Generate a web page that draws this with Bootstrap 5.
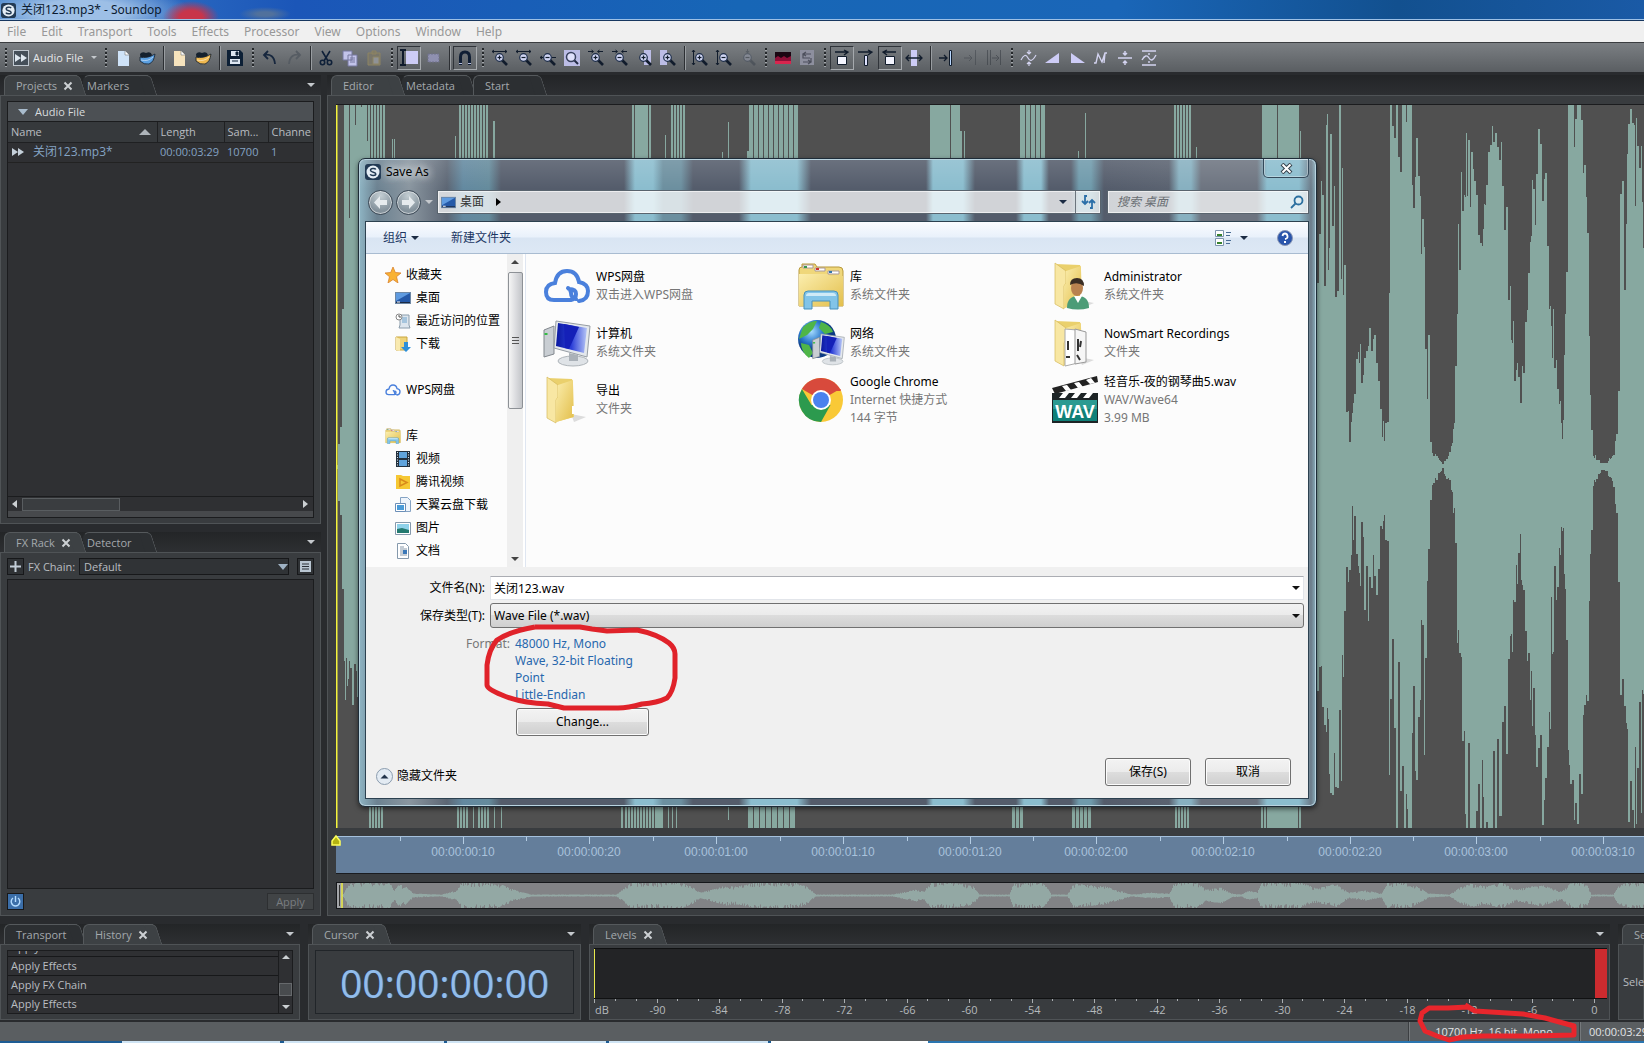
<!DOCTYPE html>
<html lang="zh-CN">
<head>
<meta charset="utf-8">
<meta name="viewport" content="width=device-width, initial-scale=1">
<title>关闭123.mp3* - Soundop</title>
<link href="https://cdn.jsdelivr.net/npm/bootstrap@5.3.0/dist/css/bootstrap.min.css" rel="stylesheet">
<style>
:root{--panel:#393c3f;--well:#2f3033;--edge:#4f5356;--ink:#b9bdc1;--teal:#87a8a0}
body{font-family:"Open Sans","Noto Sans CJK SC",sans-serif;font-size:11px;line-height:16px;color:var(--ink);background:#292b2e;height:100vh;overflow:hidden}
button,input,select{font:inherit;color:inherit}
button{border:0;background:none;padding:0;white-space:nowrap}
svg{display:block;flex:none}
a{color:inherit;text-decoration:none}
.app-title{height:21px;padding-left:1px;gap:5px;font-family:"Noto Sans","Noto Sans CJK SC",sans-serif;font-size:12px;color:#0a1a30;border-bottom:1px solid #16365f;box-shadow:inset 0 -1px #9cc0e6;
 background:radial-gradient(ellipse 28px 16px at 191px 17px,#c8354a 40%,#c3263c00),radial-gradient(ellipse 26px 7px at 265px 14px,#51719c 30%,#51719c00),radial-gradient(ellipse 110px 30px at 80px 12px,#9dbfe6 40%,#9dbfe600),linear-gradient(90deg,#3e7fca,#1b56b8 18%,#1766b6 45%,#1a66b8 68%,#12508f 85%,#1a5aa6)}
.app-menu{height:21px;background:#f0f0f0;font-family:"Noto Sans",sans-serif;font-size:12px;color:#989898}
.app-menu a{padding:0 8px 0 7px}
.app-tools{height:30px;background:linear-gradient(#7b7f83,#5a5e62);border-top:1px solid #3b3d40}
.tool{width:24px;height:24px;display:flex;align-items:center;justify-content:center;border:1px solid transparent}
.tool.on{border-color:#30343a #a5a9ad #a5a9ad #30343a}
.grip{width:11px;height:20px;background:repeating-linear-gradient(#24272a 0 2px,#a2a6aa 2px 3px,transparent 3px 4px) 5px 0/2px 100% no-repeat}
.bar{width:8px;height:24px;background:linear-gradient(90deg,#2c2f33 50%,#999da1 50%) 4px 0/2px 100% no-repeat}
.mode{width:89px;gap:4px;padding-left:2px;color:#e6e8ea}
.tri{width:0;height:0;border:4px solid transparent;border-bottom:0;border-top:4px solid #c4c8cc;flex:none}
.tri.big{border-width:6px 5px 0;border-top-color:#a9bccd}
.mode .tri{border-width:3px 3px 0}
.dock{min-width:0;min-height:0}
.work{min-height:0;padding-top:3px;gap:6px}
.tabs{height:20px;flex:none;background:linear-gradient(#232527,#2d2f32);padding:0 6px 0 4px}
.tab-x{position:relative;height:20px;padding:0 8px 0 11px;border:1px solid #55595c;border-width:1px 0 0 1px;border-radius:6px 0 0 0;background:#2c2f32;color:#a4a9ad;gap:6px;margin-right:6px;white-space:nowrap}
.tab-x::after{content:"";position:absolute;top:-1px;right:-6px;width:12px;height:20px;background:inherit;border:1px solid #55595c;border-width:1px 1px 0 0;border-top-right-radius:5px;transform:skewX(18deg)}
.tab-x>*{position:relative;z-index:1}
.tab-x.on{background:#3d4144;z-index:2}
.tab-x.next{border-left-color:transparent;padding-left:3px}
.w70{width:70px}.w73{width:73px}.w65{width:65px}
.dock-in{flex:1;background:var(--panel);border:1px solid var(--edge);min-height:0}
.dock-pad{padding:5px 6px}
.well{background:var(--well);border:1px solid #1b1c1e}
.left-col{width:321px}
.grp{height:20px;background:#4c5054;border-bottom:1px solid #1b1c1e;padding-left:10px;gap:7px;color:#d8dbdd}
.files{table-layout:fixed;width:100%;border-collapse:collapse}
.files th{height:20px;font-weight:400;background:#36393c;border-right:1px solid #1f2022;border-bottom:1px solid #1f2022;padding:0 2px 0 3px;white-space:nowrap;overflow:hidden}
.files td{height:20px;color:#84a3c4;border-bottom:1px solid #222;padding:0 3px;white-space:nowrap}
.files th:last-child{border-right:0;padding-right:0}
.track-name{font-size:12px}
.hbar{height:15px;border-top:1px solid #1b1c1e;padding:0 4px}
.hbar i{width:98px;height:13px;background:#3a3d40;border:1px solid #595d60}
.hfoot{height:6px;background:#47494c}
.sq{width:17px;height:17px;border:1px solid #17181a;background:#2f3235;display:flex;align-items:center;justify-content:center}
.sq.lit{background:#3b6ea8}
.fxsel{appearance:none;width:100%;height:17px;border:1px solid #17181a;border-radius:0;background:#303336;padding:0 4px;line-height:14px;color:var(--ink)}
.pick{position:relative;flex:1}
.pick::after{content:"";position:absolute;right:5px;top:50%;margin-top:-3px;border:5px solid transparent;border-top:6px solid #9fb2c4;border-bottom:0;pointer-events:none}
.fx-pick::after{right:1px}
.apply{width:47px;height:17px;border:1px solid #2d2f31;background:#414446;color:#797d80}
.editor{margin-right:-8px}
.ed-pad{padding:8px 0 6px 8px}
.wavebox{background:#505050;border-top:1px solid #1b1c1e;overflow:hidden;min-height:0}
.ruler{height:38px;background:#647e9b;border-top:1px solid #a4c0dc;border-bottom:1px solid #1a1c20}
.over{height:27px;background:#828386;border:1px solid #15171a;border-right:0}
.lower{height:106px;padding-bottom:2px}
.d-hist{width:300px}.d-cur{width:273px}.d-sel{width:26px}
.hist{flex:1;overflow:hidden;display:flex;flex-direction:column;justify-content:flex-end}
.hist li{height:19px;line-height:18px;padding-left:3px;border-top:1px solid #17181a;flex:none}
.vbar{width:14px;border-left:1px solid #1b1c1e;padding:4px 0}
.vbar i{width:13px;height:13px;background:#484b4e;border:1px solid #66696c;margin-top:auto;margin-bottom:9px}
.clock{font-size:39px;line-height:64px;color:#93bdea;text-shadow:1px 0 #2c5f96}
.meter{height:51px;background:#232426;border:1px solid #101112;border-width:1px 0}
.meter i:first-child{width:1px;background:#e9e94e}.meter i:last-child{width:12px;background:#cc2b2f}
.meter-pad{padding:3px 2px 0 4px}
.status-x{position:relative;height:19px;background:#5a5e61;color:#e2e4e6}
.status-x div{border-left:1px solid #3c3f42;box-shadow:inset 1px 0 #75797c;line-height:19px}
.s-fmt{width:171px}.s-len{width:65px;padding-left:9px;white-space:nowrap}
.taskbar{height:2px;background:linear-gradient(90deg,#1d5c94 122px,#cfe4f4 122px 280px,#1d5c94 280px 284px,#cfe4f4 284px 444px,#1d5c94 444px 447px,#cfe4f4 447px 606px,#1d5c94 606px 609px,#cfe4f4 609px 768px,#1d5c94 768px 771px,#fff 771px 928px,#2a75b0 928px)}
.ink-mark{position:absolute;pointer-events:none;z-index:9;overflow:visible}
/* save dialog */
.save{position:absolute;left:358px;top:158px;width:959px;height:649px;padding:0 7px 7px 6px;border:1px solid #1e2c38;border-radius:7px;box-shadow:inset 0 0 0 1px #b9d3df,0 2px 5px #0008;font-family:"Noto Sans","Noto Sans CJK SC",sans-serif;font-size:12px;line-height:18px;color:#000;z-index:5;
 background:linear-gradient(#ffffff22,transparent 30px,transparent 60px),linear-gradient(90deg,#8fb5c4 0,#6c8291 18px,#8a96a0 50px,#5c6674 88px,#6389a0 104px,#658b9c 130px,#545c6b 142px,#545c6b 265px,#8bbdce 276px,#8bbdce 294px,#6c8f9f 304px,#6c8f9f 322px,#545c6b 334px,#545c6b 380px,#8bbdce 392px,#8bbdce 438px,#545c6b 452px,#545c6b 567px,#8bbdce 574px,#8bbdce 604px,#545c6b 616px,#545c6b 657px,#8bbdce 665px,#8bbdce 682px,#545c6b 690px,#545c6b 712px,#6f9aab 720px,#6f9aab 732px,#545c6b 745px,#5a6270 810px,#87b0c0 820px,#87b0c0 832px,#6d7480 842px,#6d7480 898px,#8bbdce 908px,#8bbdce 940px,#6c7c8a 952px,#8bb0be)}
.save-title{height:31px}
.cap{height:26px;gap:5px}
.cap span{text-shadow:0 0 8px #fff,0 0 8px #fff}
.x-close{width:46px;height:19px;border:1px solid #34495a;border-top:0;border-radius:0 0 5px 5px;box-shadow:inset 0 0 0 1px #ffffff55;display:flex;align-items:center;justify-content:center}
.nav-row{height:31px;padding-bottom:7px}
.nav-b{width:25px;height:25px;margin-left:3px;border-radius:50%;border:1px solid #3b4855;background:radial-gradient(circle at 50% 20%,#c4ced3,#84929c 70%);display:flex;align-items:center;justify-content:center;box-shadow:inset 0 0 0 1px #fff8}
.addr{height:24px;background:#ffffffbb;border:1px solid #59646e;box-shadow:inset 0 0 0 1px #ffffff99;color:#333;gap:4px;padding-left:3px}
.find{width:202px;margin-left:6px}
.addr input{border:0;background:none;outline:0;font-style:italic;width:100%;min-width:0;padding:0 0 0 6px}
.addr input::placeholder{color:#6a6f74;opacity:1}
.dn{width:0;height:0;border:4px solid transparent;border-top-color:#1c2c44;border-bottom:0}
.client{flex:1;min-height:0;background:#f0f0f0;border:1px solid #2c4150}
.cmd{height:32px;background:linear-gradient(#fafcff,#e9f1fb 48%,#d9e5f3 52%,#dde8f5);border-bottom:1px solid #a9bcd1;color:#1c3763;padding:0 15px 0 17px}
.new-b{margin-left:32px}.help-b{margin-left:29px}
.browse{height:313px;background:#fcfcfc}
.tree{width:141px;overflow:hidden;padding-top:9px}
.tree li{height:23px;gap:5px;padding-left:29px;white-space:nowrap}
.tree li.root{padding-left:19px}
.sb{width:16px;background:#efefef;padding:6px 0}
.sb i{width:15px;height:137px;border:1px solid #8d9196;border-radius:2px;background:linear-gradient(90deg,#f5f5f5,#dcdde0 50%,#c3c5c9)}
.split{width:3px;background:#fff;border-right:1px solid #dfe6f1}
.items{display:grid;grid-template-columns:repeat(auto-fill,254px);grid-auto-rows:57px;padding:3px 0 0 17px;flex:1;align-content:start}
.items a{display:flex;align-items:center;gap:5px;color:#000}
.items small{display:block;font-size:12px;color:#767676}
.items svg{width:48px;height:48px}
.form-x{padding:8px 4px 0}
.fld{display:flex;align-items:center;height:25px;margin-bottom:3px}
.fld label{width:120px;text-align:right;padding-right:5px;flex:none}
.fld .pick::after{border-width:4px 4px 0;border-top-color:#111;margin-top:-2px;right:4px}
.name-in{width:100%;height:24px;border:1px solid #e2e5ea;border-top-color:#abadb3;background:#fff;padding:0 3px;line-height:20px}
.type-in{appearance:none;width:100%;height:25px;border:1px solid #707070;border-radius:3px;background:linear-gradient(#f2f2f2,#ebebeb 50%,#dcdcdc 50%,#cfcfcf);padding:0 3px;line-height:20px;color:#000}
.b7{height:28px;width:86px;border:1px solid #707070;border-radius:3px;background:linear-gradient(#f3f3f3,#ebebeb 50%,#dddddd 50%,#cfcfcf);box-shadow:inset 0 0 0 1px #fcfcfc;color:#000}
.b7.wide{width:133px;margin:5px 0 0 146px}
.fmt-row{line-height:17px;padding-top:4px;gap:5px}
.fmt-l{width:140px;text-align:right;color:#777}
.fmt{color:#2767ad;width:140px}
.foot{padding:0 13px 12px 6px;gap:14px}
.mark-fmt{left:125px;top:464px}
</style>
</head>
<body class="d-flex flex-column m-0">
<svg width="0" height="0" class="position-absolute" aria-hidden="true"><defs>
<symbol id="logo" viewBox="0 0 16 16"><rect width="16" height="16" rx="3" fill="#223a54"/><circle cx="8" cy="8" r="6.500" fill="#e4edf5"/><path d="M10.800 5.500C10 4 5.500 4 5.500 6.300S10.800 8 10.800 10 6 12 5.200 10.300" fill="none" stroke="#223a54" stroke-width="1.500"/></symbol>
<symbol id="page" viewBox="0 0 18 18"><path d="M4 2h7l4 4v11H4z"/><path d="M11 2v4h4" fill="#fff" stroke="#777" stroke-width=".6"/></symbol>
<symbol id="fold" viewBox="0 0 18 18"><path d="M2 5q2-3 6-1 5-2 6 2l-1 2H5l-2 5z" fill="#15212e"/><path d="M2 8q7 2 15-3-1 8-6 10-5 1-9-3z" stroke="#15212e" stroke-width=".8"/><path d="M3 11q7 2 12-3" stroke="#fff" stroke-opacity=".5" fill="none"/></symbol>
<symbol id="mag" viewBox="0 0 18 18"><path d="M11 11l5 5" stroke="#111c2c" stroke-width="2.600"/><circle cx="8.500" cy="8.500" r="3.800" fill="#cfd4f2" stroke="#1c2c48" stroke-width="1.200"/><path d="M6.500 8.500h4" stroke="#111c2c" stroke-width="1.200"/></symbol>
<symbol id="pl" viewBox="0 0 18 18"><path d="M8.500 6.500v4" stroke="#111c2c" stroke-width="1.200"/></symbol>
<symbol id="out" viewBox="0 0 18 18"><path d="M1 2.500h15M3 1L1 2.500 3 4M14 1l2 1.500L14 4" stroke="#111c2c" fill="none"/></symbol>
<symbol id="inn" viewBox="0 0 18 18"><path d="M1 2.500h5M4.500 1L6.500 2.500 4.500 4M16 2.500h-5M12.500 1l-2 1.500 2 1.500" stroke="#111c2c" fill="none"/></symbol>
<symbol id="ver" viewBox="0 0 18 18"><path d="M2.500 1v15M1 3l1.500-2L4 3M1 14l1.500 2L4 14" stroke="#111c2c" fill="none"/></symbol>
<symbol id="xx" viewBox="0 0 10 10"><path d="M1.500 1.500l7 7m0-7l-7 7" stroke="#ccd0d3" stroke-width="2"/></symbol>
<symbol id="mon" viewBox="0 0 16 16"><rect x=".5" y="2.500" width="15" height="11" fill="#2559a8" stroke="#6d87a4"/><path d="M1 3h14L1 11z" fill="#5f9be0"/><path d="M1 12.500h14" stroke="#1c2b45"/><path d="M2 12h3" stroke="#fff"/></symbol>
<symbol id="cloud" viewBox="0 0 48 48"><path d="M33 37q-5-1-5-6 0-3-3-5M36 39q9-1 9-10 0-7-9-9Q34 9 24 9T12 21Q3 22 3 30q0 8 8 8h17q5-1 5-6t-7-5" fill="none" stroke="#4a80dc" stroke-width="4" stroke-linecap="round"/></symbol>
<symbol id="lib" viewBox="0 0 48 48"><path d="M2 8q0-3 3-3V2h13l2 3h22q4 0 4 4v35H2z" fill="#efd77a" stroke="#b99a3c"/><path d="M6 3h10v3H6zM18 6h10v3H18zM31 9h11v3H31z" fill="#fff" stroke="#a99"/><path d="M7 4h3v2H7z" fill="#37974c"/><path d="M19 6h3v2h-3z" fill="#c33"/><path d="M32 9h3v2h-3z" fill="#37a"/><path d="M2 12h28l3 2h13v30H2z" fill="url(#gy)"/><path d="M7 47V33q0-4 4-4h26q4 0 4 4v14h-8v-8H15v8z" fill="#82c4e8" stroke="#4691bd"/><path d="M9 34q0-3 3-3h24q3 0 3 3z" fill="#cfeaf7"/></symbol>
<symbol id="dir" viewBox="0 0 48 48"><path d="M28 38l15 3-12 5z" fill="#bbb" opacity=".5"/><path d="M4 2l25 1 1 4 1 34-18 5z" fill="#ead06c"/><path d="M4 1l11 8v12l-2 3v23L4 42z" fill="#f8e7a3" stroke="#d6b95a" stroke-width=".7"/><path d="M15 9l15-5v37l-17 5V24l2-3z" fill="url(#gy)"/><path d="M30 30v8" stroke="#fff" stroke-width="2"/></symbol>
<symbol id="pc" viewBox="0 0 48 48"><path d="M1 11l10-4v28L1 38z" fill="#c9ced3" stroke="#82888e"/><path d="M3 14v2" stroke="#3b4" stroke-width="3"/><ellipse cx="30" cy="42" rx="15" ry="5" fill="#dfe3e7" stroke="#aeb4b9"/><path d="M26 34l9 2v6h-9z" fill="#aab1b8"/><path d="M13 2l34 5-3 31-33-9z" fill="#e4e8ec" stroke="#969da4"/><path d="M15 4l29 5-3 25-28-7z" fill="url(#gb)"/><path d="M21 5l15 3-10 22-4-1z" fill="#1420b8"/></symbol>
<linearGradient id="gy" x2="1" y2="1"><stop stop-color="#fbeeae"/><stop offset="1" stop-color="#e3bf4c"/></linearGradient>
<linearGradient id="gb"><stop stop-color="#0a18a0"/><stop offset=".5" stop-color="#2c3fd8"/><stop offset="1" stop-color="#b6c6f6"/></linearGradient>
<radialGradient id="gg" cx=".35" cy=".3"><stop stop-color="#a6dcff"/><stop offset=".6" stop-color="#2a78cc"/><stop offset="1" stop-color="#0c3a84"/></radialGradient>
</defs></svg>

<header class="app-title d-flex align-items-center flex-shrink-0"><svg width="15" height="15"><use href="#logo"/></svg><span>关闭123.mp3* - Soundop</span></header>
<nav class="app-menu d-flex align-items-center flex-shrink-0"><a href="#">File</a><a href="#">Edit</a><a href="#">Transport</a><a href="#">Tools</a><a href="#">Effects</a><a href="#">Processor</a><a href="#">View</a><a href="#">Options</a><a href="#">Window</a><a href="#">Help</a></nav>
<div class="app-tools d-flex align-items-center flex-shrink-0" role="toolbar">
<span class="grip"></span>
<button class="mode d-flex align-items-center"><svg width="16" height="16"><rect x=".5" y=".5" width="15" height="15" fill="#454f59" stroke="#c0c8d0"/><path d="M2 4l6 4-6 4zM8 4l6 4-6 4z" fill="#dfe8f0"/></svg><span>Audio File</span><span class="tri ms-1"></span></button>
<span class="grip"></span>
<button class="tool" aria-label="New file"><svg width="18" height="18" fill="#cfe3f8"><use href="#page"/></svg></button>
<button class="tool" aria-label="Open file"><svg width="18" height="18" fill="#5b9fe0"><use href="#fold"/></svg></button><span class="bar"></span>
<button class="tool" aria-label="New session"><svg width="18" height="18" fill="#f6e3bd"><use href="#page"/></svg></button>
<button class="tool" aria-label="Open session"><svg width="18" height="18" fill="#f0b950"><use href="#fold"/></svg></button><span class="bar"></span>
<button class="tool" aria-label="Save"><svg width="18" height="18"><path d="M1 1h13l3 3v13H1z" fill="#0d2036"/><path d="M5 2h8v5H5zM4 10h10v5H4z" fill="#dde6f2"/><path d="M10 3h2v3h-2zM6 12h6" fill="#0d2036" stroke="#0d2036"/></svg></button>
<span class="grip"></span>
<button class="tool" aria-label="Undo"><svg width="18" height="18" fill="none" stroke="#17273e" stroke-width="1.800"><path d="M3 6q10-2 11 9M7 2L3 6l4 4"/></svg></button>
<button class="tool" aria-label="Redo"><svg width="18" height="18" fill="none" stroke="#565c63" stroke-width="1.800"><path d="M15 6Q5 4 4 15M11 2l4 4-4 4"/></svg></button><span class="bar"></span>
<button class="tool" aria-label="Cut"><svg width="18" height="18" fill="none" stroke="#0f2038" stroke-width="1.600"><path d="M5 2l6 10M13 2L7 12"/><circle cx="5.500" cy="13.500" r="2.200"/><circle cx="12.500" cy="13.500" r="2.200"/></svg></button>
<button class="tool" aria-label="Copy"><svg width="18" height="18" fill="#c2c3ea" stroke="#77799f"><path d="M2 2h9v9H2zM7 6h9v11H7z"/><path d="M9 9h5M9 11h5M9 13h5"/></svg></button>
<button class="tool" aria-label="Paste"><svg width="18" height="18" fill="#79766a" stroke="#8d8462"><path d="M3 4h12v12H3zM7 2h4v3H7z"/><path d="M8 8h6v7H8z" fill="#8f9296"/></svg></button>
<span class="grip"></span>
<button class="tool on" aria-label="Time selection"><svg width="20" height="18"><path d="M7 2h12v13H7z" fill="#cdccf6"/><path d="M1 1h6M1 16h6M4 1v15" stroke="#0f1a2c" stroke-width="2"/></svg></button>
<button class="tool" aria-label="Marquee"><svg width="18" height="18"><rect x="4" y="5" width="11" height="8" fill="#8f90b0" stroke="#71728c" stroke-dasharray="2 1"/></svg></button><span class="bar"></span>
<button class="tool on" aria-label="Snap"><svg width="18" height="18" fill="none" stroke="#101e34" stroke-width="3"><path d="M4.500 16V8q0-5 4.500-5t4.500 5v8"/><path d="M3 14.500h3m6 0h3" stroke="#b8bfe0" stroke-width="1"/></svg></button>
<span class="grip"></span>
<button class="tool" aria-label="Zoom in"><svg width="18" height="18"><use href="#out"/><use href="#mag"/><use href="#pl"/></svg></button>
<button class="tool" aria-label="Zoom out"><svg width="18" height="18"><use href="#out"/><use href="#mag"/></svg></button>
<button class="tool" aria-label="Zoom full"><svg width="18" height="18"><use href="#mag"/><path d="M1 8.500h3m9 0h4M3 7L1 8.500 3 10" stroke="#111c2c" fill="none"/></svg></button>
<button class="tool" aria-label="Zoom selection"><svg width="18" height="18"><path d="M1 1h16v16H1z" fill="#bcbde6"/><path d="M11 11l4 4" stroke="#222a44" stroke-width="2"/><circle cx="8" cy="8" r="4.500" fill="#dfe0fb" stroke="#39415e" stroke-width="1.500"/></svg></button>
<button class="tool" aria-label="Zoom in left"><svg width="18" height="18"><use href="#inn"/><use href="#mag"/><use href="#pl"/></svg></button>
<button class="tool" aria-label="Zoom out left"><svg width="18" height="18"><use href="#inn"/><use href="#mag"/></svg></button>
<button class="tool" aria-label="Zoom to start"><svg width="18" height="18"><path d="M9 1h7v15H9z" fill="#bcbde6"/><use href="#mag"/><use href="#pl"/></svg></button>
<button class="tool" aria-label="Zoom to end"><svg width="18" height="18"><path d="M1 1h7v15H1z" fill="#bcbde6"/><use href="#mag"/><use href="#pl"/></svg></button><span class="bar"></span>
<button class="tool" aria-label="Zoom in vertically"><svg width="18" height="18"><use href="#ver"/><use href="#mag"/><use href="#pl"/></svg></button>
<button class="tool" aria-label="Zoom out vertically"><svg width="18" height="18"><use href="#ver"/><use href="#mag"/></svg></button>
<button class="tool opacity-25" aria-label="Zoom vertical full"><svg width="18" height="18"><use href="#mag"/><path d="M8.500 0v4M7 2l1.500 2L10 2" stroke="#111c2c" fill="none"/></svg></button>
<span class="grip"></span>
<button class="tool" aria-label="Spectral view"><svg width="18" height="18"><path d="M1 3h16v12H1z" fill="#1b0612"/><path d="M1 9l3-2 3 2 3-2 3 2 4-2v8H1z" fill="#8e1038"/><path d="M1 12h16v3H1z" fill="#d8264e"/></svg></button>
<button class="tool" aria-label="Swap"><svg width="18" height="18"><path d="M2 1h14v15H2z" fill="#8d8f9e"/><path d="M13 5H5v4h7M8 3L5 5l3 2M5 13h8V9M10 11l3 2-3 2" fill="none" stroke="#4c4f5c" stroke-width="1.200"/></svg></button>
<span class="grip"></span>
<button class="tool on" aria-label="Follow playback"><svg width="18" height="18"><path d="M2 3h12M11 1l4 2-4 3" stroke="#111c2c" stroke-width="1.300" fill="none"/><path d="M4.500 7.500h9v8h-9z" fill="#f4f5ff" stroke="#111c2c"/></svg></button>
<button class="tool" aria-label="Center playhead"><svg width="18" height="18"><path d="M1 3h13M11 1l4 2-4 3" stroke="#111c2c" stroke-width="1.300" fill="none"/><path d="M7.500 6.500h3v10h-3z" fill="#dfe2ff" stroke="#111c2c"/></svg></button>
<button class="tool on" aria-label="Return to start"><svg width="18" height="18"><path d="M3 3h12M6 1L2 3l4 3" stroke="#111c2c" stroke-width="1.300" fill="none"/><path d="M4.500 7.500h9v8h-9z" fill="#f4f5ff" stroke="#111c2c"/></svg></button>
<button class="tool" aria-label="Scrub"><svg width="18" height="18"><path d="M6 1h6v16H6z" fill="#cdccf6"/><path d="M1 9h16M4 6L1 9l3 3M14 6l3 3-3 3" stroke="#111c2c" stroke-width="1.300" fill="none"/></svg></button><span class="bar"></span>
<button class="tool" aria-label="To marker"><svg width="18" height="18"><path d="M2 9h8M7 6l3 3-3 3" stroke="#111c2c" stroke-width="1.300" fill="none"/><path d="M12.500 1.500h2v15h-2z" fill="#b9d8ff" stroke="#111c2c"/></svg></button>
<button class="tool opacity-50" aria-label="Add marker"><svg width="18" height="18"><path d="M3 9h8M8 6l3 3-3 3M14.500 1v15" stroke="#3c4148" fill="none"/></svg></button>
<button class="tool opacity-50" aria-label="Marker range"><svg width="18" height="18"><path d="M2.500 1v15M5.500 1v15M7 9h6M11 6l3 3-3 3M15.500 1v15" stroke="#30353c" fill="none"/></svg></button>
<span class="grip"></span>
<button class="tool" aria-label="Normalize"><svg width="18" height="18" fill="none" stroke="#d3d3ef" stroke-width="1.200"><path d="M1 11q4-8 7-2t8-3M9 1v3M7 3l2 2 2-2M9 17v-3M7 15l2-2 2 2"/></svg></button>
<button class="tool" aria-label="Fade in"><svg width="18" height="18"><path d="M1 14L15 4v10z" fill="#cdccf6"/></svg></button>
<button class="tool" aria-label="Fade out"><svg width="18" height="18"><path d="M3 4v10h14z" fill="#cdccf6"/></svg></button>
<button class="tool" aria-label="Reverse"><svg width="18" height="18" fill="none" stroke="#d3d3ef" stroke-width="1.400"><path d="M2 14h2l2-9 4 8 3-9h2M13 4l-1 10"/></svg></button>
<button class="tool" aria-label="Silence"><svg width="18" height="18" fill="none" stroke="#d3d3ef" stroke-width="1.500"><path d="M2 9h14M9 2v4M7 4l2 2 2-2M9 16v-4M7 14l2-2 2 2"/></svg></button>
<button class="tool" aria-label="Limit"><svg width="18" height="18" fill="none" stroke="#d3d3ef" stroke-width="1.400"><path d="M2 2h14M2 16h14M2 11q4-7 7-2t7-3M9 4v2M9 14v-2"/></svg></button>
</div>

<main class="work d-flex flex-grow-1">
 <section class="left-col d-flex flex-column gap-2 flex-shrink-0">
  <div class="dock d-flex flex-column" style="flex:449 1 0">
   <div class="tabs d-flex align-items-center"><div class="tab-x on w73 d-flex align-items-center"><span>Projects</span><svg width="10" height="10"><use href="#xx"/></svg></div><div class="tab-x next w65 d-flex align-items-center"><span>Markers</span></div><span class="tri ms-auto"></span></div>
   <div class="dock-in dock-pad"><div class="well h-100 d-flex flex-column">
    <div class="grp d-flex align-items-center"><span class="tri big"></span><span>Audio File</span></div>
    <table class="files"><colgroup><col style="width:149px"><col style="width:67px"><col style="width:44px"><col></colgroup>
    <thead><tr><th><span class="d-flex align-items-center justify-content-between">Name <svg class="me-1" width="12" height="6"><path d="M0 6l6-6 6 6z" fill="#aeb4ba"/></svg></span></th><th>Length</th><th>Sam...</th><th>Channe</th></tr></thead>
    <tbody><tr><td><span class="d-flex align-items-center gap-2"><svg width="14" height="10"><path d="M1 1l6 4-6 4zM7 1l6 4-6 4z" fill="#c5d0da"/></svg><span class="track-name">关闭123.mp3*</span></span></td><td>00:00:03:29</td><td>10700</td><td>1</td></tr></tbody></table>
    <div class="hbar d-flex align-items-center mt-auto gap-1"><svg width="6" height="8"><path d="M5 0v8L0 4z" fill="#ccd0d3"/></svg><i></i><svg class="ms-auto" width="6" height="8"><path d="M0 0v8l5-4z" fill="#ccd0d3"/></svg></div>
    <div class="hfoot"></div>
   </div></div>
  </div>
  <div class="dock d-flex flex-column" style="flex:384 1 0">
   <div class="tabs d-flex align-items-center"><div class="tab-x on w73 d-flex align-items-center"><span>FX Rack</span><svg width="10" height="10"><use href="#xx"/></svg></div><div class="tab-x next w65 d-flex align-items-center"><span>Detector</span></div><span class="tri ms-auto"></span></div>
   <div class="dock-in dock-pad d-flex flex-column gap-1">
    <div class="d-flex align-items-center gap-1"><button class="sq" aria-label="Add effect"><svg width="11" height="11"><path d="M5.500 0v11M0 5.500h11" stroke="#c3ced8" stroke-width="2"/></svg></button><label for="fx">FX Chain:</label><div class="pick fx-pick"><select id="fx" class="fxsel"><option>Default</option></select></div><button class="sq ms-1" aria-label="Presets"><svg width="11" height="11"><path d="M0 0h11v11H0z" fill="#b9c6d2"/><path d="M2 3h7M2 5.500h7M2 8h7" stroke="#2a3038"/></svg></button></div>
    <div class="well flex-grow-1"></div>
    <div class="d-flex justify-content-between"><button class="sq lit" aria-label="Power"><svg width="11" height="11" fill="none" stroke="#b4dcff" stroke-width="1.400"><path d="M3 2q-2.500 2-1.500 5T5.500 10 9.500 7 8 2M5.500 0v6"/></svg></button><button class="apply">Apply</button></div>
   </div>
  </div>
 </section>
 <section class="dock editor d-flex flex-column flex-grow-1">
  <div class="tabs d-flex align-items-center"><div class="tab-x on w65 d-flex align-items-center"><span>Editor</span></div><div class="tab-x next w65 d-flex align-items-center"><span>Metadata</span></div><div class="tab-x w65 d-flex align-items-center"><span>Start</span></div></div>
  <div class="dock-in ed-pad d-flex flex-column">
   <div class="wavebox flex-grow-1 mb-2" id="wave"></div>
   <div class="ruler mb-2" id="ruler"></div>
   <div class="over" id="over"></div>
  </div>
 </section>
</main>

<section class="lower d-flex gap-2 pt-2 flex-shrink-0 overflow-hidden">
 <div class="dock d-hist d-flex flex-column">
  <div class="tabs d-flex align-items-center"><div class="tab-x d-flex align-items-center w73"><span>Transport</span></div><div class="tab-x on d-flex align-items-center w70"><span>History</span><svg width="10" height="10"><use href="#xx"/></svg></div><span class="tri ms-auto"></span></div>
  <div class="dock-in dock-pad"><div class="well h-100 d-flex overflow-hidden"><ul class="hist list-unstyled m-0"><li>Apply Effects</li><li>Apply Effects</li><li>Apply FX Chain</li><li>Apply Effects</li></ul><div class="vbar d-flex flex-column align-items-center"><svg width="8" height="4"><path d="M0 4l4-4 4 4z" fill="#ccd0d3"/></svg><i></i><svg width="8" height="4"><path d="M0 0l4 4 4-4z" fill="#ccd0d3"/></svg></div></div></div>
 </div>
 <div class="dock d-cur d-flex flex-column">
  <div class="tabs d-flex align-items-center"><div class="tab-x on w70 d-flex align-items-center"><span>Cursor</span><svg width="10" height="10"><use href="#xx"/></svg></div><span class="tri ms-auto"></span></div>
  <div class="dock-in dock-pad"><div class="clock border border-dark h-100 text-center">00:00:00:00</div></div>
 </div>
 <div class="dock d-flex flex-column flex-grow-1">
  <div class="tabs d-flex align-items-center"><div class="tab-x on w65 d-flex align-items-center"><span>Levels</span><svg width="10" height="10"><use href="#xx"/></svg></div><span class="tri ms-auto"></span></div>
  <div class="dock-in meter-pad"><div class="meter d-flex justify-content-between"><i></i><i></i></div><div id="scale"></div></div>
 </div>
 <div class="dock d-sel d-flex flex-column flex-shrink-0 overflow-hidden">
  <div class="tabs d-flex pe-0"><div class="tab-x on d-flex align-items-center w70 flex-shrink-0"><span>Se</span></div></div>
  <div class="dock-in d-flex align-items-center ps-1">Sele</div>
 </div>
</section>
<footer class="status-x d-flex justify-content-end flex-shrink-0"><div class="s-fmt text-center">10700 Hz, 16 bit, Mono</div><div class="s-len overflow-hidden">00:00:03:29</div>
<svg class="ink-mark end-0 bottom-0" width="236" height="36" viewBox="1408 1007 236 36" fill="none" stroke="#e8262c" stroke-width="5" stroke-linejoin="round"><path d="M1475 1013l-7-4-20 1h-19l-7 5-2 8 5 10 12 5 12 4 14-3 20-1h48l43-1v-9l-29-8-22-4-48-3-10-6"/></svg></footer>
<div class="taskbar flex-shrink-0"></div>

<div class="save d-flex flex-column" role="dialog" aria-label="Save As">
 <div class="save-title d-flex"><div class="cap d-flex align-items-center flex-grow-1"><svg width="16" height="16"><use href="#logo"/></svg><span>Save As</span></div><button class="x-close" aria-label="Close"><svg width="13" height="11"><path d="M2 1l9 9M11 1l-9 9" stroke="#333f4a" stroke-width="4"/><path d="M2.500 1.500l8 8M10.500 1.500l-8 8" stroke="#fff" stroke-width="2"/></svg></button></div>
 <div class="nav-row d-flex align-items-center">
  <button class="nav-b" aria-label="Back"><svg width="15" height="13"><path d="M7 0L1 6.500 7 13V9h7V4H7z" fill="#e6ebee"/></svg></button><button class="nav-b" aria-label="Forward"><svg width="15" height="13"><path d="M8 0l6 6.500L8 13V9H1V4h7z" fill="#e6ebee"/></svg></button><span class="tri mx-1"></span>
  <div class="addr flex-grow-1 d-flex align-items-center"><svg width="15" height="15"><use href="#mon"/></svg><span>桌面</span><svg class="ms-2" width="5" height="8"><path d="M0 0l5 4-5 4z"/></svg><span class="dn ms-auto me-1"></span><span class="h-100 border-start border-secondary d-flex align-items-center px-1"><svg width="16" height="14" fill="none" stroke="#2c6fa8" stroke-width="1.800"><path d="M7 1H5v8M2 6l3 3 3-3M10 13h2V5M9 8l3-3 3 3"/></svg></span></div>
  <div class="addr find d-flex align-items-center"><input type="search" placeholder="搜索 桌面" aria-label="搜索"><svg class="me-1" width="14" height="14" fill="none" stroke="#2c6f9f" stroke-width="1.800"><circle cx="8.500" cy="5.500" r="4"/><path d="M5.500 8.500L1 13"/></svg></div>
 </div>
 <div class="client d-flex flex-column">
  <div class="cmd d-flex align-items-center flex-shrink-0"><button class="d-flex align-items-center gap-1">组织 <span class="dn"></span></button><button class="new-b">新建文件夹</button>
   <button class="ms-auto d-flex align-items-center gap-2" aria-label="View"><svg width="17" height="16"><path d="M.5.500h8v6h-8zM.5 8.500h8v7h-8z" fill="#fff" stroke="#7c94ac"/><path d="M2 5h5M2 13h5" stroke="#36812d" stroke-width="2"/><path d="M11 2.500h5M11 5.500h4M11 10.500h5M11 13.500h4" stroke="#4a6d94"/></svg><span class="dn"></span></button>
   <button class="help-b" aria-label="Help"><svg width="16" height="16"><circle cx="8" cy="8" r="7.500" fill="#2a55ab" stroke="#8a97b5"/><path d="M5.500 6q.5-2.500 2.500-2.500T10.500 6 8 9" fill="none" stroke="#fff" stroke-width="1.800"/><path d="M7 11h2v2H7z" fill="#fff"/></svg></button></div>
  <div class="browse d-flex flex-shrink-0">
   <ul class="tree list-unstyled m-0">
    <li class="root d-flex align-items-center"><svg width="16" height="16"><path d="M8 0l2.300 5.500L16 6l-4.500 3.700L13 16l-5-3.500L3 16l1.500-6.300L0 6l5.700-.5z" fill="#f9b233" stroke="#d9822b" stroke-width=".8"/></svg>收藏夹</li>
    <li class="d-flex align-items-center"><svg width="16" height="16"><use href="#mon"/></svg>桌面</li>
    <li class="d-flex align-items-center"><svg width="16" height="16"><path d="M5 2h9v10l1 3H4l1-3z" fill="#dde6ee" stroke="#8a9cab"/><path d="M7 5h5M7 7h5M7 9h5" stroke="#6fa3cc"/><circle cx="4" cy="4" r="3" fill="#fff" stroke="#888"/><path d="M4 2v2h2" stroke="#555" fill="none"/></svg>最近访问的位置</li>
    <li class="d-flex align-items-center"><svg width="16" height="16"><path d="M1 1h11v13H1z" fill="#eed47a" stroke="#caa63e"/><path d="M1 1l4 2v12l-4-1z" fill="#f9eab0"/><path d="M9 6h4v5h3l-5 5-5-5h3z" fill="#2d8fd8"/></svg>下载</li>
    <li></li>
    <li class="root d-flex align-items-center"><svg width="16" height="16"><use href="#cloud"/></svg>WPS网盘</li>
    <li></li>
    <li class="root d-flex align-items-center"><svg width="16" height="16"><use href="#lib"/></svg>库</li>
    <li class="d-flex align-items-center"><svg width="16" height="16"><path d="M1 0h14v16H1z" fill="#22303e"/><path d="M4 1h8v6H4zM4 9h8v6H4z" fill="#5fa3dc"/><path d="M2.500 1v15M13.500 1v15" stroke="#dfe6ec" stroke-dasharray="1 1.500"/></svg>视频</li>
    <li class="d-flex align-items-center"><svg width="16" height="16"><path d="M1 1h5l2 1h7v13H1z" fill="#f6c834"/><path d="M5 5l7 3.500L5 12z" fill="none" stroke="#d98a1a" stroke-width="1.500"/></svg>腾讯视频</li>
    <li class="d-flex align-items-center"><svg width="16" height="16"><path d="M5.500.500h7l3 3v11h-10z" fill="#eef4fb" stroke="#85a3c4"/><path d="M.5 6.500h10v8H.5z" fill="#fff" stroke="#6b8fb8"/><path d="M2 8h7v5H2z" fill="#4a9bd8"/></svg>天翼云盘下载</li>
    <li class="d-flex align-items-center"><svg width="16" height="16"><path d="M.5 2.500h15v12H.5z" fill="#fff" stroke="#8599ac"/><path d="M2 4h12v9H2z" fill="#8fd2ea"/><path d="M2 9l5-1 7 2v3H2z" fill="#247a70"/></svg>图片</li>
    <li class="d-flex align-items-center"><svg width="16" height="16"><path d="M2.500.500h8l3 3v12h-11z" fill="#fff" stroke="#8599ac"/><path d="M5 4h4M5 6h7M5 8h3M5 10h3M5 12h7" stroke="#89a"/><path d="M8 7h4v4H8z" fill="#3b78b8"/></svg>文档</li>
   </ul>
   <div class="sb d-flex flex-column align-items-center justify-content-between"><svg width="8" height="4"><path d="M0 4l4-4 4 4z" fill="#444"/></svg><i class="d-flex align-items-center justify-content-center mb-auto mt-2"><svg width="7" height="8"><path d="M0 .5h7M0 3.500h7M0 6.500h7" stroke="#555"/></svg></i><svg width="8" height="4"><path d="M0 0l4 4 4-4z" fill="#444"/></svg></div>
   <div class="split"></div>
   <div class="items">
    <a href="#"><svg><use href="#cloud"/></svg><span>WPS网盘<small>双击进入WPS网盘</small></span></a>
    <a href="#"><svg><use href="#lib"/></svg><span>库<small>系统文件夹</small></span></a>
    <a href="#"><svg viewBox="0 0 48 48"><use href="#dir"/><path d="M16 46q0-12 11-12t11 12q-11 3-22 0z" fill="#4c9c77"/><path d="M23 34l4 7 4-7z" fill="#fff"/><ellipse cx="26" cy="26" rx="6" ry="8" fill="#b98250"/><path d="M19 23q0-7 7-7t7 8q-7-5-14-1z" fill="#3a2d24"/></svg><span>Administrator<small>系统文件夹</small></span></a>
    <a href="#"><svg><use href="#pc"/></svg><span>计算机<small>系统文件夹</small></span></a>
    <a href="#"><svg viewBox="0 0 48 48"><circle cx="20" cy="20" r="19" fill="url(#gg)"/><path d="M6 8q8-7 14-6l-4 8-6 6-8 4zM24 3q10 3 12 10l-8 2-6-6zM4 24l8 2 4 8-4 5q-8-6-8-15z" fill="#4fb548"/><use href="#pc" x="15" y="13" width="33" height="34"/></svg><span>网络<small>系统文件夹</small></span></a>
    <a href="#"><svg viewBox="0 0 48 48"><use href="#dir"/><path d="M14 10l12 1 1 33-13 3z" fill="#fff" stroke="#aaa"/><path d="M24 10l11 3v30l-11 2z" fill="#f6f6f6" stroke="#999"/><path d="M17 22v9M27 20v12M15 38h4M26 36l3 5M30 22l-1 6" stroke="#333" stroke-width="2"/></svg><span>NowSmart Recordings<small>文件夹</small></span></a>
    <a href="#"><svg><use href="#dir"/></svg><span>导出<small>文件夹</small></span></a>
    <a href="#"><svg viewBox="0 0 48 48"><circle cx="24" cy="24" r="22" fill="#f9c937"/><path d="M24 24L4.900 13A22 22 0 0 1 43 13z" fill="#d84a3c"/><path d="M4.900 13A22 22 0 0 0 24 46l9.500-17L14.500 29z" fill="#2c9a4e"/><path d="M24 14h19.700" stroke="#d84a3c" stroke-width="2"/><circle cx="24" cy="24" r="10" fill="#fff"/><circle cx="24" cy="24" r="8" fill="#4a82ee"/></svg><span>Google Chrome<small>Internet 快捷方式</small><small>144 字节</small></span></a>
    <a href="#"><svg viewBox="0 0 48 48"><path d="M1 12L46 0l1 6L4 18z" fill="#222"/><path d="M11 10l4 5 5-1-4-5zM23 7l4 5 5-1-4-5zM35 4l4 4 5-1-4-5z" fill="#fff"/><path d="M1 17h46v30H1z" fill="#1d2426"/><path d="M8 22l4-5h6l-4 5zM20 22l4-5h6l-4 5zM32 22l4-5h6l-4 5z" fill="#fff"/><path d="M2 24h44v21H2z" fill="#0f8078"/><path d="M2 24h44v9H2z" fill="#2b9a91"/><text x="24" y="42" text-anchor="middle" font-size="18" font-weight="700" font-family="Liberation Sans,sans-serif" fill="#fff">WAV</text></svg><span>轻音乐-夜的钢琴曲5.wav<small>WAV/Wave64</small><small>3.99 MB</small></span></a>
   </div>
  </div>
  <form class="form-x d-flex flex-column flex-grow-1">
   <div class="fld"><label for="fn">文件名(N):</label><div class="pick"><input id="fn" class="name-in" value="关闭123.wav"></div></div>
   <div class="fld"><label for="ft">保存类型(T):</label><div class="pick"><select id="ft" class="type-in"><option>Wave File (*.wav)</option></select></div></div>
   <div class="fmt-row d-flex"><div class="fmt-l">Format:</div><div class="fmt">48000 Hz, Mono<br>Wave, 32-bit Floating Point<br>Little-Endian</div></div>
   <div><button type="button" class="b7 wide">Change...</button></div>
   <div class="foot d-flex align-items-center mt-auto"><button type="button" class="d-flex align-items-center gap-1 pt-2"><svg width="17" height="17"><circle cx="8.500" cy="8.500" r="8" fill="#e3ebf3" stroke="#8b9cae"/><path d="M4.500 10.500l4-4 4 4z" fill="#22334a"/></svg>隐藏文件夹</button><button type="button" class="b7 ms-auto">保存(S)</button><button type="button" class="b7">取消</button></div>
  </form>
 </div>
 <svg class="ink-mark mark-fmt" width="198" height="90" viewBox="484 623 198 90" fill="none" stroke="#e0222a" stroke-width="5" stroke-linejoin="round"><path d="M535 627h45l12 2 15 2 30-1q20 4 32 13 6 5 6 11v24q-2 14-8 20-10 5-25 6-14 4-24 4h-54l-16-4q-28-1-46-9-15-6-15-10v-20q2-16 10-25 14-9 38-13"/></svg>
</div>

<script src="https://cdn.jsdelivr.net/npm/bootstrap@5.3.0/dist/js/bootstrap.bundle.min.js"></script>
<script>
let seed = 7;
const rnd = () => (seed = (seed * 16807) % 2147483647) / 2147483647;
const lerp = (pts, x, k) => {
  for (let i = 1; i < pts.length; i++) if (x <= pts[i][0]) {
    const a = pts[i-1], b = pts[i], t = (x - a[0]) / (b[0] - a[0]);
    return a[k] + (b[k] - a[k]) * t;
  }
  return pts[pts.length-1][k];
};
/* x, outer top, inner top, outer bottom, inner bottom */
const tail = [[1317,235,340,700,650],[1322,160,290,710,650],[1327,104,280,760,700],[1331,104,360,805,730],[1341,104,300,780,690],[1344,250,400,640,570],[1347,380,470,590,520],[1352,400,415,545,505],[1358,330,380,580,510],[1367,322,390,630,540],[1376,325,385,610,510],[1383,420,450,540,510],[1387,420,460,540,510],[1389,90,310,790,600],[1394,60,200,870,660],[1405,80,170,870,640],[1414,80,250,850,680],[1420,130,260,829,620],[1425,240,370,740,600],[1429,350,440,560,500],[1431,445,455,490,478],[1442,463,465,468,467],[1450,448,456,488,476],[1454,420,440,520,490],[1457,240,340,650,580],[1462,150,230,770,660],[1467,122,200,860,720],[1473,165,220,870,780],[1481,240,255,870,700],[1488,150,190,870,740],[1494,110,140,860,720],[1499,104,160,829,680],[1505,150,270,790,670],[1512,290,380,660,600],[1519,390,440,560,510],[1524,320,380,620,570],[1529,200,310,710,600],[1537,120,300,780,660],[1542,150,310,829,660],[1547,160,340,829,640],[1552,300,360,670,560],[1557,340,410,590,540],[1562,430,445,530,500],[1565,270,370,600,560],[1568,80,120,800,720],[1575,60,180,825,740],[1584,80,190,825,700],[1587,220,300,700,620],[1590,390,430,560,510],[1593,452,457,485,478],[1602,462,464,468,467],[1612,455,460,480,475],[1617,420,440,520,500],[1620,190,340,740,650],[1630,106,260,850,660],[1660,104,250,850,690]];
const head = [[336,462,464,468,467],[340,380,450,560,490],[343,190,300,640,600],[345,104,240,700,650],[358,104,220,725,660],[372,104,300,720,600],[376,460,462,470,468]];
const ox = 336, oy = 104;
let d = '';
const line = (x, a, b, w = 1) => d += `M${x-ox} ${Math.round(a)-oy}h${w}V${Math.round(b)-oy}h-${w}z`;
[head, tail].forEach(p => {
  for (let x = p[0][0]; x < p[p.length-1][0];) {
    const w = rnd() < .55 ? 2 : 1, r = Math.pow(rnd(), 1.500), q = Math.pow(rnd(), 1.500);
    line(x, lerp(p,x,1) + (lerp(p,x,2)-lerp(p,x,1))*r, lerp(p,x,3) - (lerp(p,x,3)-lerp(p,x,4))*q, w);
    x += w;
  }
});
/* start, end, pitch, bar width, top, bottom */
[[344,365,6,5,104,300],[365,386,3,2,104,300],[392,395,2,1,138,300],[455,456,3,1,135,300],[459,487,3,2,104,300],[493,495,3,2,120,300],[632,638,3,2,104,300],[637,646,9,9,104,300],[646,652,3,2,104,300],[665,667,3,1,134,300],[671,684,3,2,104,300],[722,723,2,1,151,300],[728,729,2,1,121,300],[749,795,5,4,104,300],[747,749,3,2,150,300],
[930,950,20,20,104,300],[951,960,9,9,104,300],[960,962,2,2,130,300],[964,965,3,1,130,300],[1020,1026,6,5,104,300],[1026,1042,5,4,104,300],[1078,1079,3,1,150,300],[1085,1086,3,1,112,300],[1174,1192,3,2,104,300],[1196,1198,3,1,146,300],[1262,1277,15,15,104,300],[1278,1299,21,21,104,300],[1300,1302,2,1,130,300],
[369,384,3,2,700,829],[457,468,3,2,700,829],[473,474,2,1,700,829],[478,489,3,2,700,829],[494,495,2,1,700,829],[501,502,2,1,700,827],[621,628,4,2,700,829],[628,655,3,2,700,829],[655,663,8,8,700,829],[668,678,4,1,700,828],[728,729,2,1,700,819],[748,793,6,5,700,829],[1012,1022,4,3,700,829],[1072,1089,4,3,700,829],[1175,1190,3,2,700,829],[1261,1269,3,2,700,829],[1269,1296,27,27,700,829],[1296,1302,3,2,700,829]
].forEach(([a,b,p,w,t,u]) => { for (let x = a; x < b; x += p) line(x, t, u, w); });
document.getElementById('wave').innerHTML =
 `<svg width="100%" height="100%"><path d="${d}" fill="#87a8a0"/><path d="M.5 0v740" stroke="#f4f43c" stroke-width="2"/></svg>`;

/* frame ruler: a label every ten frames */
const step = 126.7, labels = ['00:10','00:20','01:00','01:10','01:20','02:00','02:10','02:20','03:00','03:10'];
let r = '';
labels.forEach((t, i) => { const x = Math.round((i+1)*step);
  r += `<path d="M${x+.5} 0v7M${Math.round(x-step/2)+.5} 0v4" stroke="#b5cde4"/><text x="${x}" y="19" text-anchor="middle">00:00:${t}</text>`; });
document.getElementById('ruler').innerHTML =
 `<svg width="100%" height="36" class="overflow-visible" font-family="Liberation Sans,sans-serif" font-size="12" fill="#a9c2dc">${r}<path d="M-4 8V4L0-1 4 4v4z" fill="#b3b312" stroke="#ffff5a" stroke-width="1.500"/></svg>`;

/* overview of the whole clip: x, half height */
const ov = [[341,0],[343,3],[346,10],[352,13],[388,13],[393,6],[398,11],[405,9],[412,2],[440,1],[455,5],[460,13],[495,13],[505,9],[515,5],[530,1],[615,1],[620,5],[630,13],[680,13],[690,9],[700,3],[710,6],[725,10],[735,9],[745,11],[752,13],[795,13],[805,9],[815,1],[890,1],[900,3],[915,6],[922,4],[930,13],[960,12],[972,9],[978,1],[1008,1],[1012,12],[1040,13],[1046,8],[1050,1],[1066,1],[1072,12],[1105,9],[1130,1],[1150,3],[1168,2],[1173,13],[1195,13],[1205,6],[1220,8],[1230,2],[1240,1],[1247,5],[1256,3],[1260,13],[1300,13],[1315,7],[1335,12],[1347,3],[1365,5],[1380,2],[1386,13],[1410,12],[1428,2],[1448,1],[1460,9],[1470,12],[1485,9],[1500,13],[1515,6],[1540,11],[1560,4],[1570,13],[1585,12],[1590,1],[1612,1],[1617,9],[1625,13],[1660,13]];
let o = '';
for (let x = 341; x < 1650; x++) { const a = lerp(ov,x,1), u = Math.max(.5, a*(1-.35*Math.pow(rnd(),2))), v = Math.max(.5, a*(1-.35*Math.pow(rnd(),2)));
  o += `M${x-336} ${(12.5-u).toFixed(1)}h1V${(12.5+v).toFixed(1)}h-1z`; }
document.getElementById('over').innerHTML =
 `<svg width="100%" height="25"><path d="${o}" fill="#93a8a4"/><path d="M0 0h4v25H0z" fill="#a3a5a8"/><path d="M2.500 2v21" stroke="#333"/><path d="M5 0v25" stroke="#f0f04a" stroke-width="1.500"/></svg>`;

/* level scale, -96 dB to 0 dB */
const sc = document.getElementById('scale'), W = sc.clientWidth - 13;
let s = '<text x="1" y="15">dB</text>';
for (let db = -96; db <= 0; db += 2) { const x = Math.round(W*(db+96)/96)+.5, big = db % 6 === 0;
  s += `<path d="M${x} 0v${big?4:2}" stroke="#a9adb0"/>`;
  if (big && db > -96) s += `<text x="${x}" y="15" text-anchor="middle">${db}</text>`; }
sc.innerHTML = `<svg width="100%" height="19" font-size="11" fill="#b5b9bc">${s}</svg>`;
</script>
</body>
</html>
